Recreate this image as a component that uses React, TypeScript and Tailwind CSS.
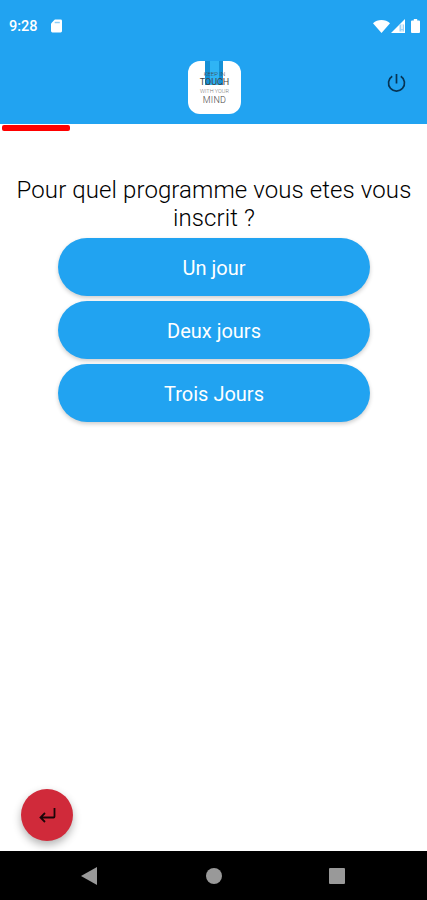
const programs = ["Un jour", "Deux jours", "Trois Jours"];

const StatusBar = () => (
  <div className="flex h-[52px] items-center justify-between pl-[9px] pr-[7px] text-white">
    <div className="flex items-center gap-[13px]">
      <span className="pt-[2px] text-[14.5px] font-medium leading-none">9:28</span>
      <svg width="11" height="14" viewBox="0 0 12 14" fill="none">
        <path
          d="M4.2 0H10.5Q12 0 12 1.5V12.5Q12 14 10.5 14H1.5Q0 14 0 12.5V4.2Z"
          fill="currentColor"
        />
        <path d="M4 3.2h5.6" stroke="#8dcdf7" strokeWidth="1.6" />
      </svg>
    </div>
    <div className="flex items-center">
      <svg width="17" height="13" viewBox="0 0 17 13" fill="currentColor">
        <path d="M8.5 13 0 3.2C2.4 1 5.2 0 8.5 0S14.6 1 17 3.2Z" />
      </svg>
      <svg className="ml-px" width="14" height="14" viewBox="0 0 14 14">
        <path d="M14 0V14H0Z" fill="white" />
        <path d="M8.5 5.5H13V12.5H8.5Z" fill="#9fd4f7" />
        <path d="M11 5.5V10M11 11.3V12.5" stroke="white" strokeWidth="1.3" />
      </svg>
      <svg className="ml-[6px]" width="9" height="14" viewBox="0 0 9 14" fill="currentColor">
        <path d="M2.8 0H6.2V1.4H8Q9 1.4 9 2.4V13Q9 14 8 14H1Q0 14 0 13V2.4Q0 1.4 1 1.4H2.8Z" />
      </svg>
    </div>
  </div>
);

const Logo = () => (
  <div className="relative flex h-[53px] w-[53px] flex-col items-center overflow-hidden rounded-[12px] bg-white pt-[9px] text-[#444]">
    <div className="absolute left-[17px] top-0 h-[24px] w-[18px] bg-[#1590d6]">
      <div className="ml-[5px] h-full w-[9px] bg-[#2fb4f5]" />
    </div>
    <span className="relative text-[6px] font-light leading-[7px]">KEEP IN</span>
    <span className="relative text-[9px] leading-[11px]">TOUCH</span>
    <span className="relative text-[5.5px] font-light leading-[7px] text-[#777]">
      WITH YOUR
    </span>
    <span className="relative text-[9px] font-light leading-[11px] tracking-[0.3px]">
      MIND
    </span>
  </div>
);

const Header = () => (
  <header className="h-[124px] bg-[#21a3f1]">
    <StatusBar />
    <div className="grid grid-cols-3 items-center pt-[9px]">
      <div />
      <div className="flex justify-center pl-[2px]">
        <Logo />
      </div>
      <button className="mb-[9px] mr-[21px] justify-self-end text-[#073453]" aria-label="Power">
        <svg
          width="19"
          height="20"
          viewBox="0 0 19 20"
          fill="none"
          stroke="currentColor"
          strokeWidth="1.7"
        >
          <path d="M9.5 1V10.5M5.2 3.3A8 8 0 1 0 13.8 3.3" />
        </svg>
      </button>
    </div>
  </header>
);

const NavBar = () => (
  <nav className="flex h-[49px] items-center justify-between bg-black pl-[81px] pr-[82px] text-[#999]">
    <svg width="16" height="18" viewBox="0 0 16 18" fill="currentColor">
      <path d="M16 0V18L0 9Z" />
    </svg>
    <div className="ml-[2px] h-4 w-4 rounded-full bg-[#999]" />
    <div className="h-4 w-4 rounded-[1px] bg-[#999]" />
  </nav>
);

export default function App() {
  return (
    <div className="flex h-[900px] w-[427px] flex-col overflow-hidden bg-white font-[Roboto,sans-serif]">
      <Header />
      <div className="ml-[2px] mt-[1px] h-[6px] w-[68px] rounded-[2px] bg-[#ff0000]" />
      <main className="flex flex-1 flex-col items-center pt-[45px]">
        <h1 className="pl-px text-center text-[24px] font-[350] leading-[28px] tracking-[0.1px] text-black">
          Pour quel programme vous etes vous
          <br />
          inscrit ?
        </h1>
        <div className="mt-[6px] flex flex-col gap-[5px]">
          {programs.map((program) => (
            <button
              key={program}
              className="h-[58px] w-[312px] rounded-full bg-[#21a3f1] pl-px pt-[2px] text-[20px] text-white shadow-[0_2px_4px_rgba(0,0,0,0.2)]"
            >
              {program}
            </button>
          ))}
        </div>
        <button
          className="mb-[10px] ml-[21px] mt-auto flex h-[52px] w-[52px] items-center justify-center self-start rounded-full bg-[#d02a3a] text-[#1c0508] shadow-[0_4px_8px_rgba(0,0,0,0.3)]"
          aria-label="Retour"
        >
          <svg
            width="18"
            height="16"
            viewBox="0 0 18 16"
            fill="none"
            stroke="currentColor"
            strokeWidth="1.8"
          >
            <path d="M16.5 1V9.5Q16.5 10.5 15.5 10.5H2.5M7 6 2.5 10.5 7 15" />
          </svg>
        </button>
      </main>
      <NavBar />
    </div>
  );
}
